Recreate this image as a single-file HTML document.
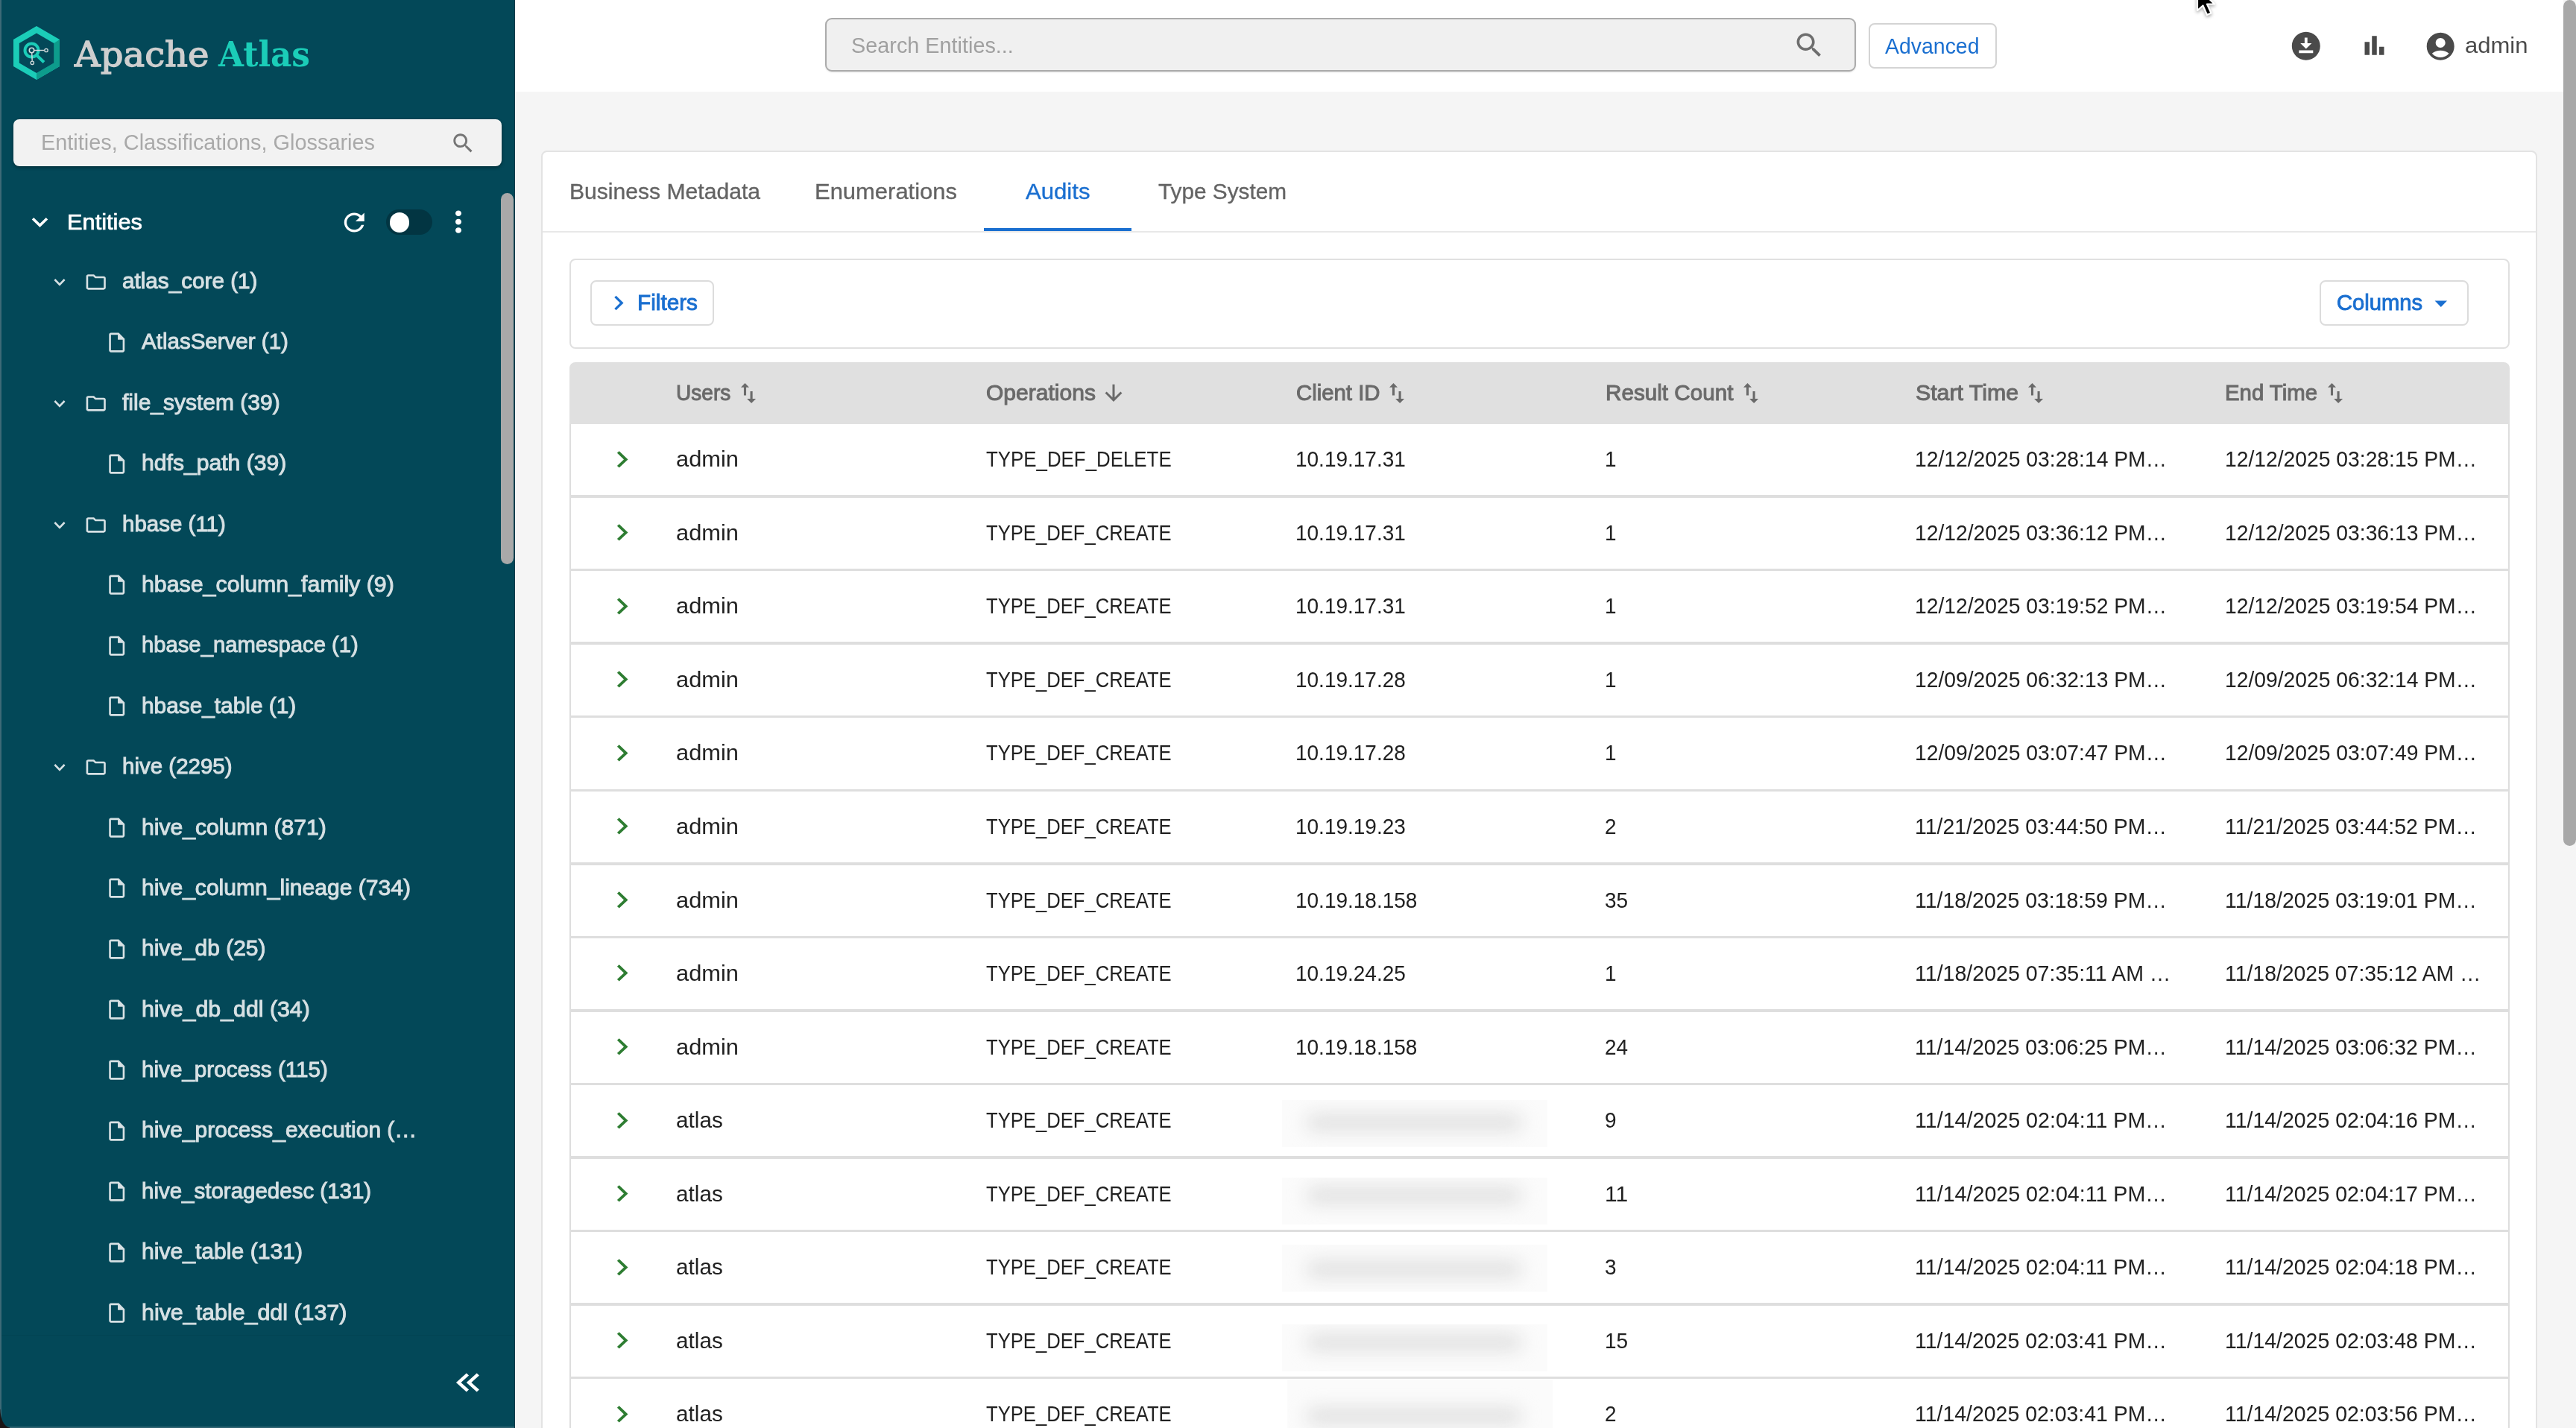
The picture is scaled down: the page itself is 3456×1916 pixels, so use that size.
<!DOCTYPE html>
<html lang="en"><head><meta charset="utf-8"><title>Apache Atlas - Audits</title>
<style>
html,body{margin:0;padding:0}
body{width:3456px;height:1916px;overflow:hidden;background:#f5f5f5;position:relative;font-family:"Liberation Sans",sans-serif}
.abs{position:absolute}
.ic{position:absolute;display:block;overflow:visible}
.t{position:absolute;white-space:pre;transform-origin:0 50%;line-height:1}
.sf{font-family:"DejaVu Serif","Liberation Serif",serif}
</style></head>
<body>
<aside aria-label="Sidebar">
<div class="abs" style="left:0;top:0;width:691px;height:1916px;background:#034858"></div>
<div class="abs" style="left:0;top:0;width:2px;height:1916px;background:#3d6a77"></div><div class="abs" style="left:0;top:1913.5px;width:691px;height:2.5px;background:#2f6472"></div><div class="abs" style="left:2px;top:1790.5px;width:689px;height:1.5px;background:rgba(0,0,0,.05)"></div>
<div class="abs" style="left:689.5px;top:0;width:1.5px;height:1916px;background:#023a49"></div>
<svg class="ic" style="left:18px;top:35px" width="62" height="72" viewBox="0 0 62 72">
<polygon points="31,0 62,18 62,54 31,72 0,54 0,18" fill="#1bcdb8"/>
<polygon points="62,18 62,54 31,72 31,63 54.3,49.6 54.3,22.9" fill="#0d9c8c"/>
<polygon points="31,9.5 54.3,22.9 54.3,49.6 31,63 7.8,49.6 7.8,22.9" fill="#034858"/>
<circle cx="24.5" cy="32.5" r="9" fill="none" stroke="#1bcdb8" stroke-width="4"/>
<line x1="31" y1="39" x2="41" y2="48.5" stroke="#1bcdb8" stroke-width="4"/>
<circle cx="24.5" cy="32.5" r="3.2" fill="none" stroke="#d5dcdd" stroke-width="1.6"/>
<line x1="27.7" y1="32.5" x2="41.5" y2="32.5" stroke="#d5dcdd" stroke-width="1.4"/>
<circle cx="44" cy="32.5" r="2.2" fill="none" stroke="#d5dcdd" stroke-width="1.3"/>
<line x1="24.7" y1="35.7" x2="25.2" y2="46.8" stroke="#d5dcdd" stroke-width="1.4"/>
<circle cx="25.3" cy="49.3" r="2.2" fill="none" stroke="#d5dcdd" stroke-width="1.3"/>
</svg>
<span class="t sf" style="left:100.0px;top:50.1px;font-size:46.0px;color:#cfcfcf;transform:scaleX(1.0451);-webkit-text-stroke:1.3px #cfcfcf">Apache</span>
<span class="t sf" style="left:293.0px;top:50.1px;font-size:46.0px;color:#1bcdb8;transform:scaleX(0.9512);font-weight:700">Atlas</span>
<div class="abs" style="left:18px;top:160px;width:655px;height:63px;background:#f2f2f2;border-radius:8px;box-shadow:0 2px 4px rgba(0,0,0,.35)"></div>
<span class="t" style="left:54.5px;top:175.9px;font-size:29.34px;color:#a9a9a9;transform:scaleX(0.9852)">Entities, Classifications, Glossaries</span>
<svg class="ic" style="left:603.88px;top:174.68px" width="34.58" height="34.58" viewBox="0 0 24 24" preserveAspectRatio="none" fill="#757575"><path d="M15.5 14h-.79l-.28-.27C15.41 12.59 16 11.11 16 9.5 16 5.91 13.09 3 9.5 3S3 5.91 3 9.5 5.91 16 9.5 16c1.61 0 3.09-.59 4.23-1.57l.27.28v.79l5 4.99L20.49 19l-4.99-5zm-6 0C7.01 14 5 11.99 5 9.5S7.01 5 9.5 5 14 7.01 14 9.5 11.99 14 9.5 14z"/></svg>
<svg class="ic" style="left:31.75px;top:277.43px" width="43.00" height="42.11" viewBox="0 0 24 24" preserveAspectRatio="none" fill="#fff"><path d="M16.59 8.59 12 13.17 7.41 8.59 6 10l6 6 6-6z"/></svg>
<span class="t" style="left:89.5px;top:283.2px;font-size:29.34px;color:#fff;transform:scaleX(1.0500);-webkit-text-stroke:0.7px #fff">Entities</span>
<svg class="ic" style="left:455.25px;top:278.50px" width="40.50" height="39.00" viewBox="0 0 24 24" preserveAspectRatio="none" fill="#fff"><path d="M17.65 6.35C16.2 4.9 14.21 4 12 4c-4.42 0-7.99 3.58-7.99 8s3.57 8 7.99 8c3.73 0 6.84-2.55 7.73-6h-2.08c-.82 2.33-3.04 4-5.65 4-3.31 0-6-2.69-6-6s2.69-6 6-6c1.66 0 3.14.69 4.22 1.78L13 11h7V4l-2.35 2.35z"/></svg>
<div class="abs" style="left:518px;top:281px;width:62px;height:34px;border-radius:17px;background:#023542"></div>
<div class="abs" style="left:522.5px;top:285px;width:26.5px;height:26.5px;border-radius:50%;background:#fff"></div>
<svg class="ic" style="left:591.00px;top:275.45px" width="48.00" height="45.30" viewBox="0 0 24 24" preserveAspectRatio="none" fill="#fff"><path d="M12 8c1.1 0 2-.9 2-2s-.9-2-2-2-2 .9-2 2 .9 2 2 2zm0 2c-1.1 0-2 .9-2 2s.9 2 2 2 2-.9 2-2-.9-2-2-2zm0 6c-1.1 0-2 .9-2 2s.9 2 2 2 2-.9 2-2-.9-2-2-2z"/></svg>
<div class="abs" style="left:672px;top:259px;width:17px;height:498px;border-radius:8.5px;background:#a9a9a9"></div>
<svg class="ic" style="left:64.50px;top:363.07px" width="30.00" height="31.09" viewBox="0 0 24 24" preserveAspectRatio="none" fill="#d7e1e4"><path d="M16.59 8.59 12 13.17 7.41 8.59 6 10l6 6 6-6z"/></svg>
<svg class="ic" style="left:113.38px;top:363.18px" width="31.44" height="30.75" viewBox="0 0 24 24" preserveAspectRatio="none" fill="#d7e1e4"><path d="M9.17 6l2 2H20v10H4V6h5.17M10 4H4c-1.1 0-1.99.9-1.99 2L2 18c0 1.1.9 2 2 2h16c1.1 0 2-.9 2-2V8c0-1.1-.9-2-2-2h-8l-2-2z"/></svg>
<span class="t" style="left:164.0px;top:362.0px;font-size:29.34px;color:#d7e1e4;transform:scaleX(1.0117);-webkit-text-stroke:0.95px #d7e1e4">atlas_core (1)</span>
<svg class="ic" style="left:140.75px;top:443.78px" width="31.50" height="31.32" viewBox="0 0 24 24" preserveAspectRatio="none" fill="#d7e1e4"><path d="M14 2H6c-1.1 0-1.99.9-1.99 2L4 20c0 1.1.89 2 1.99 2H18c1.1 0 2-.9 2-2V8l-6-6zM6 20V4h7v5h5v11H6z"/></svg>
<span class="t" style="left:189.5px;top:443.4px;font-size:29.34px;color:#d7e1e4;transform:scaleX(1.0069);-webkit-text-stroke:0.95px #d7e1e4">AtlasServer (1)</span>
<svg class="ic" style="left:64.50px;top:525.85px" width="30.00" height="31.09" viewBox="0 0 24 24" preserveAspectRatio="none" fill="#d7e1e4"><path d="M16.59 8.59 12 13.17 7.41 8.59 6 10l6 6 6-6z"/></svg>
<svg class="ic" style="left:113.38px;top:525.96px" width="31.44" height="30.75" viewBox="0 0 24 24" preserveAspectRatio="none" fill="#d7e1e4"><path d="M9.17 6l2 2H20v10H4V6h5.17M10 4H4c-1.1 0-1.99.9-1.99 2L2 18c0 1.1.9 2 2 2h16c1.1 0 2-.9 2-2V8c0-1.1-.9-2-2-2h-8l-2-2z"/></svg>
<span class="t" style="left:164.0px;top:524.7px;font-size:29.34px;color:#d7e1e4;transform:scaleX(1.0225);-webkit-text-stroke:0.95px #d7e1e4">file_system (39)</span>
<svg class="ic" style="left:140.75px;top:606.56px" width="31.50" height="31.32" viewBox="0 0 24 24" preserveAspectRatio="none" fill="#d7e1e4"><path d="M14 2H6c-1.1 0-1.99.9-1.99 2L4 20c0 1.1.89 2 1.99 2H18c1.1 0 2-.9 2-2V8l-6-6zM6 20V4h7v5h5v11H6z"/></svg>
<span class="t" style="left:189.5px;top:606.1px;font-size:29.34px;color:#d7e1e4;transform:scaleX(1.0274);-webkit-text-stroke:0.95px #d7e1e4">hdfs_path (39)</span>
<svg class="ic" style="left:64.50px;top:688.63px" width="30.00" height="31.09" viewBox="0 0 24 24" preserveAspectRatio="none" fill="#d7e1e4"><path d="M16.59 8.59 12 13.17 7.41 8.59 6 10l6 6 6-6z"/></svg>
<svg class="ic" style="left:113.38px;top:688.74px" width="31.44" height="30.75" viewBox="0 0 24 24" preserveAspectRatio="none" fill="#d7e1e4"><path d="M9.17 6l2 2H20v10H4V6h5.17M10 4H4c-1.1 0-1.99.9-1.99 2L2 18c0 1.1.9 2 2 2h16c1.1 0 2-.9 2-2V8c0-1.1-.9-2-2-2h-8l-2-2z"/></svg>
<span class="t" style="left:164.0px;top:687.5px;font-size:29.34px;color:#d7e1e4;transform:scaleX(1.0059);-webkit-text-stroke:0.95px #d7e1e4">hbase (11)</span>
<svg class="ic" style="left:140.75px;top:769.34px" width="31.50" height="31.32" viewBox="0 0 24 24" preserveAspectRatio="none" fill="#d7e1e4"><path d="M14 2H6c-1.1 0-1.99.9-1.99 2L4 20c0 1.1.89 2 1.99 2H18c1.1 0 2-.9 2-2V8l-6-6zM6 20V4h7v5h5v11H6z"/></svg>
<span class="t" style="left:189.5px;top:768.9px;font-size:29.34px;color:#d7e1e4;transform:scaleX(1.0339);-webkit-text-stroke:0.95px #d7e1e4">hbase_column_family (9)</span>
<svg class="ic" style="left:140.75px;top:850.73px" width="31.50" height="31.32" viewBox="0 0 24 24" preserveAspectRatio="none" fill="#d7e1e4"><path d="M14 2H6c-1.1 0-1.99.9-1.99 2L4 20c0 1.1.89 2 1.99 2H18c1.1 0 2-.9 2-2V8l-6-6zM6 20V4h7v5h5v11H6z"/></svg>
<span class="t" style="left:189.5px;top:850.3px;font-size:29.34px;color:#d7e1e4;transform:scaleX(0.9965);-webkit-text-stroke:0.95px #d7e1e4">hbase_namespace (1)</span>
<svg class="ic" style="left:140.75px;top:932.12px" width="31.50" height="31.32" viewBox="0 0 24 24" preserveAspectRatio="none" fill="#d7e1e4"><path d="M14 2H6c-1.1 0-1.99.9-1.99 2L4 20c0 1.1.89 2 1.99 2H18c1.1 0 2-.9 2-2V8l-6-6zM6 20V4h7v5h5v11H6z"/></svg>
<span class="t" style="left:189.5px;top:931.7px;font-size:29.34px;color:#d7e1e4;transform:scaleX(1.0167);-webkit-text-stroke:0.95px #d7e1e4">hbase_table (1)</span>
<svg class="ic" style="left:64.50px;top:1014.19px" width="30.00" height="31.09" viewBox="0 0 24 24" preserveAspectRatio="none" fill="#d7e1e4"><path d="M16.59 8.59 12 13.17 7.41 8.59 6 10l6 6 6-6z"/></svg>
<svg class="ic" style="left:113.38px;top:1014.30px" width="31.44" height="30.75" viewBox="0 0 24 24" preserveAspectRatio="none" fill="#d7e1e4"><path d="M9.17 6l2 2H20v10H4V6h5.17M10 4H4c-1.1 0-1.99.9-1.99 2L2 18c0 1.1.9 2 2 2h16c1.1 0 2-.9 2-2V8c0-1.1-.9-2-2-2h-8l-2-2z"/></svg>
<span class="t" style="left:164.0px;top:1013.1px;font-size:29.34px;color:#d7e1e4;transform:scaleX(1.0059);-webkit-text-stroke:0.95px #d7e1e4">hive (2295)</span>
<svg class="ic" style="left:140.75px;top:1094.90px" width="31.50" height="31.32" viewBox="0 0 24 24" preserveAspectRatio="none" fill="#d7e1e4"><path d="M14 2H6c-1.1 0-1.99.9-1.99 2L4 20c0 1.1.89 2 1.99 2H18c1.1 0 2-.9 2-2V8l-6-6zM6 20V4h7v5h5v11H6z"/></svg>
<span class="t" style="left:189.5px;top:1094.5px;font-size:29.34px;color:#d7e1e4;transform:scaleX(1.0273);-webkit-text-stroke:0.95px #d7e1e4">hive_column (871)</span>
<svg class="ic" style="left:140.75px;top:1176.29px" width="31.50" height="31.32" viewBox="0 0 24 24" preserveAspectRatio="none" fill="#d7e1e4"><path d="M14 2H6c-1.1 0-1.99.9-1.99 2L4 20c0 1.1.89 2 1.99 2H18c1.1 0 2-.9 2-2V8l-6-6zM6 20V4h7v5h5v11H6z"/></svg>
<span class="t" style="left:189.5px;top:1175.9px;font-size:29.34px;color:#d7e1e4;transform:scaleX(1.0250);-webkit-text-stroke:0.95px #d7e1e4">hive_column_lineage (734)</span>
<svg class="ic" style="left:140.75px;top:1257.68px" width="31.50" height="31.32" viewBox="0 0 24 24" preserveAspectRatio="none" fill="#d7e1e4"><path d="M14 2H6c-1.1 0-1.99.9-1.99 2L4 20c0 1.1.89 2 1.99 2H18c1.1 0 2-.9 2-2V8l-6-6zM6 20V4h7v5h5v11H6z"/></svg>
<span class="t" style="left:189.5px;top:1257.3px;font-size:29.34px;color:#d7e1e4;transform:scaleX(1.0206);-webkit-text-stroke:0.95px #d7e1e4">hive_db (25)</span>
<svg class="ic" style="left:140.75px;top:1339.07px" width="31.50" height="31.32" viewBox="0 0 24 24" preserveAspectRatio="none" fill="#d7e1e4"><path d="M14 2H6c-1.1 0-1.99.9-1.99 2L4 20c0 1.1.89 2 1.99 2H18c1.1 0 2-.9 2-2V8l-6-6zM6 20V4h7v5h5v11H6z"/></svg>
<span class="t" style="left:189.5px;top:1338.6px;font-size:29.34px;color:#d7e1e4;transform:scaleX(1.0336);-webkit-text-stroke:0.95px #d7e1e4">hive_db_ddl (34)</span>
<svg class="ic" style="left:140.75px;top:1420.46px" width="31.50" height="31.32" viewBox="0 0 24 24" preserveAspectRatio="none" fill="#d7e1e4"><path d="M14 2H6c-1.1 0-1.99.9-1.99 2L4 20c0 1.1.89 2 1.99 2H18c1.1 0 2-.9 2-2V8l-6-6zM6 20V4h7v5h5v11H6z"/></svg>
<span class="t" style="left:189.5px;top:1420.0px;font-size:29.34px;color:#d7e1e4;transform:scaleX(1.0108);-webkit-text-stroke:0.95px #d7e1e4">hive_process (115)</span>
<svg class="ic" style="left:140.75px;top:1501.85px" width="31.50" height="31.32" viewBox="0 0 24 24" preserveAspectRatio="none" fill="#d7e1e4"><path d="M14 2H6c-1.1 0-1.99.9-1.99 2L4 20c0 1.1.89 2 1.99 2H18c1.1 0 2-.9 2-2V8l-6-6zM6 20V4h7v5h5v11H6z"/></svg>
<span class="t" style="left:189.5px;top:1501.4px;font-size:29.34px;color:#d7e1e4;transform:scaleX(1.0202);-webkit-text-stroke:0.95px #d7e1e4">hive_process_execution (…</span>
<svg class="ic" style="left:140.75px;top:1583.24px" width="31.50" height="31.32" viewBox="0 0 24 24" preserveAspectRatio="none" fill="#d7e1e4"><path d="M14 2H6c-1.1 0-1.99.9-1.99 2L4 20c0 1.1.89 2 1.99 2H18c1.1 0 2-.9 2-2V8l-6-6zM6 20V4h7v5h5v11H6z"/></svg>
<span class="t" style="left:189.5px;top:1582.8px;font-size:29.34px;color:#d7e1e4;transform:scaleX(1.0054);-webkit-text-stroke:0.95px #d7e1e4">hive_storagedesc (131)</span>
<svg class="ic" style="left:140.75px;top:1664.63px" width="31.50" height="31.32" viewBox="0 0 24 24" preserveAspectRatio="none" fill="#d7e1e4"><path d="M14 2H6c-1.1 0-1.99.9-1.99 2L4 20c0 1.1.89 2 1.99 2H18c1.1 0 2-.9 2-2V8l-6-6zM6 20V4h7v5h5v11H6z"/></svg>
<span class="t" style="left:189.5px;top:1664.2px;font-size:29.34px;color:#d7e1e4;transform:scaleX(1.0268);-webkit-text-stroke:0.95px #d7e1e4">hive_table (131)</span>
<svg class="ic" style="left:140.75px;top:1746.02px" width="31.50" height="31.32" viewBox="0 0 24 24" preserveAspectRatio="none" fill="#d7e1e4"><path d="M14 2H6c-1.1 0-1.99.9-1.99 2L4 20c0 1.1.89 2 1.99 2H18c1.1 0 2-.9 2-2V8l-6-6zM6 20V4h7v5h5v11H6z"/></svg>
<span class="t" style="left:189.5px;top:1745.6px;font-size:29.34px;color:#d7e1e4;transform:scaleX(1.0361);-webkit-text-stroke:0.95px #d7e1e4">hive_table_ddl (137)</span>
<svg class="ic" style="left:599.08px;top:1829.50px" width="55.48" height="50.00" viewBox="0 0 24 24" preserveAspectRatio="none" fill="#fff"><path d="M17.59 18 19 16.59 14.42 12 19 7.41 17.59 6l-6 6zM11.59 18 13 16.59 8.42 12 13 7.41 11.59 6l-6 6z"/></svg>
<div class="abs" style="left:0;top:1891px;width:13px;height:25px;background:radial-gradient(13px 25px at 100% 0%, rgba(0,0,0,0) 0, rgba(0,0,0,0) 93%, #1b1515 100%)"></div>
</aside>
<header>
<div class="abs" style="left:691px;top:0;width:2765px;height:123px;background:#fff"></div>
<div class="abs" style="left:1107px;top:24px;width:1382.6px;height:72.4px;box-sizing:border-box;background:#f0f0f0;border:2.5px solid #ababab;border-radius:9px;box-shadow:0 1px 2px rgba(0,0,0,.12)"></div>
<span class="t" style="left:1142.0px;top:45.7px;font-size:29.34px;color:#a0a0a0;transform:scaleX(0.9827)">Search Entities...</span>
<svg class="ic" style="left:2405.44px;top:39.08px" width="44.46" height="43.36" viewBox="0 0 24 24" preserveAspectRatio="none" fill="#6e6e6e"><path d="M15.5 14h-.79l-.28-.27C15.41 12.59 16 11.11 16 9.5 16 5.91 13.09 3 9.5 3S3 5.91 3 9.5 5.91 16 9.5 16c1.61 0 3.09-.59 4.23-1.57l.27.28v.79l5 4.99L20.49 19l-4.99-5zm-6 0C7.01 14 5 11.99 5 9.5S7.01 5 9.5 5 14 7.01 14 9.5 11.99 14 9.5 14z"/></svg>
<div class="abs" style="left:2507px;top:31.4px;width:172px;height:60.4px;box-sizing:border-box;background:#fff;border:2px solid #d4d4d4;border-radius:8px"></div>
<span class="t" style="left:2529.0px;top:46.7px;font-size:29.34px;color:#1a6fd0;transform:scaleX(0.9697)">Advanced</span>
<svg class="ic" style="left:3071.20px;top:39.20px" width="45.60" height="45.60" viewBox="0 0 24 24" preserveAspectRatio="none" fill="#4a4a4a"><path d="M12 2C6.49 2 2 6.49 2 12s4.49 10 10 10 10-4.49 10-10S17.51 2 12 2zm-1 8V6h2v4h3l-4 4-4-4h3zm6 7H7v-2h10v2z"/></svg>
<svg class="ic" style="left:3165.50px;top:42.05px" width="39.00" height="38.10" viewBox="0 0 24 24" preserveAspectRatio="none" fill="#4a4a4a"><path d="M4 9h4v11H4zM10 4h4v16h-4zM16 13h4v7h-4z"/></svg>
<svg class="ic" style="left:3251.80px;top:39.80px" width="44.40" height="44.40" viewBox="0 0 24 24" preserveAspectRatio="none" fill="#4a4a4a"><path d="M12 2C6.48 2 2 6.48 2 12s4.48 10 10 10 10-4.48 10-10S17.52 2 12 2zm0 4c1.93 0 3.5 1.57 3.5 3.5S13.93 13 12 13s-3.5-1.57-3.5-3.5S10.07 6 12 6zm0 14c-2.03 0-4.43-.82-6.14-2.88C7.55 15.8 9.68 15 12 15s4.45.8 6.14 2.12C16.43 19.18 14.03 20 12 20z"/></svg>
<span class="t" style="left:3306.5px;top:46.0px;font-size:29.34px;color:#4a4a4a;transform:scaleX(1.0577)">admin</span>
<div class="abs" style="left:3439px;top:0;width:17px;height:1916px;background:#f5f5f5"></div>
<div class="abs" style="left:3439px;top:0px;width:17px;height:1135px;border-radius:8.5px;background:#a8a8a8"></div>
</header>
<main>
<div class="abs" style="left:726px;top:202px;width:2678px;height:1760px;box-sizing:border-box;background:#fff;border:2px solid #e3e3e3;border-radius:8px"></div>
<span class="t" style="left:764.3px;top:242.2px;font-size:29.34px;color:#646464;transform:scaleX(1.0263);-webkit-text-stroke:0.35px #646464">Business Metadata</span>
<span class="t" style="left:1092.7px;top:242.2px;font-size:29.34px;color:#646464;transform:scaleX(1.0555);-webkit-text-stroke:0.35px #646464">Enumerations</span>
<span class="t" style="left:1375.5px;top:242.2px;font-size:29.34px;color:#1a6fd0;transform:scaleX(1.0611);-webkit-text-stroke:0.35px #1a6fd0">Audits</span>
<span class="t" style="left:1554.0px;top:242.2px;font-size:29.34px;color:#646464;transform:scaleX(1.0147);-webkit-text-stroke:0.35px #646464">Type System</span>
<div class="abs" style="left:728px;top:310px;width:2674px;height:2px;background:#e8e8e8"></div>
<div class="abs" style="left:1320px;top:306px;width:198px;height:4px;background:#1a6fd0"></div>
<div class="abs" style="left:764px;top:347px;width:2603px;height:121px;box-sizing:border-box;background:#fff;border:2px solid #e0e0e0;border-radius:8px"></div>
<div class="abs" style="left:792px;top:376px;width:166px;height:60.7px;box-sizing:border-box;background:#fff;border:2px solid #dcdcdc;border-radius:8px"></div>
<svg class="ic" style="left:809.74px;top:387.05px" width="39.84" height="39.00" viewBox="0 0 24 24" preserveAspectRatio="none" fill="#1a6fd0"><path d="M10 6 8.59 7.41 13.17 12l-4.58 4.59L10 18l6-6z"/></svg>
<span class="t" style="left:855.2px;top:391.2px;font-size:29.34px;color:#1a6fd0;transform:scaleX(1.0145);-webkit-text-stroke:0.9px #1a6fd0">Filters</span>
<div class="abs" style="left:3112px;top:376px;width:200px;height:60.7px;box-sizing:border-box;background:#fff;border:2px solid #dcdcdc;border-radius:8px"></div>
<span class="t" style="left:3134.6px;top:391.1px;font-size:29.34px;color:#1a6fd0;transform:scaleX(0.9937);-webkit-text-stroke:0.9px #1a6fd0">Columns</span>
<svg class="ic" style="left:3254.95px;top:385.90px" width="39.60" height="41.76" viewBox="0 0 24 24" preserveAspectRatio="none" fill="#1a6fd0"><path d="M7 10l5 5 5-5z"/></svg>
<div class="abs" style="left:764px;top:569px;width:2603px;height:1400px;box-sizing:border-box;border-left:2px solid #dedede;border-right:2px solid #dedede;background:#fff"></div>
<div class="abs" style="left:764px;top:486px;width:2603px;height:83px;background:#e0e0e0;border-radius:8px 8px 0 0"></div>
<span class="t" style="left:907.3px;top:512.0px;font-size:29.34px;color:#6a6a6a;transform:scaleX(0.9570);-webkit-text-stroke:1.0px #6a6a6a">Users</span>
<svg class="ic" style="left:993.9px;top:512px" width="22" height="32" viewBox="0 0 22 32" fill="#6a6a6a"><path d="M5.5 1.9 L11 7.8 H7.05 V18.6 H3.95 V7.8 H0 Z"/><path d="M14.1 29 L8.1 23.1 H12.55 V12.9 H15.65 V23.1 H20.1 Z"/></svg>
<span class="t" style="left:1323.0px;top:512.0px;font-size:29.34px;color:#6a6a6a;transform:scaleX(1.0246);-webkit-text-stroke:1.0px #6a6a6a">Operations</span>
<svg class="ic" style="left:1481.5px;top:515px" width="25" height="25" viewBox="0 0 25 25" fill="none" stroke="#6a6a6a" stroke-width="3" stroke-linecap="butt" stroke-linejoin="miter"><path d="M12 0.7 V21 M1.6 11.5 L12 21.9 L22.4 11.5"/></svg>
<span class="t" style="left:1738.5px;top:512.0px;font-size:29.34px;color:#6a6a6a;transform:scaleX(1.0003);-webkit-text-stroke:1.0px #6a6a6a">Client ID</span>
<svg class="ic" style="left:1864.3px;top:512px" width="22" height="32" viewBox="0 0 22 32" fill="#6a6a6a"><path d="M5.5 1.9 L11 7.8 H7.05 V18.6 H3.95 V7.8 H0 Z"/><path d="M14.1 29 L8.1 23.1 H12.55 V12.9 H15.65 V23.1 H20.1 Z"/></svg>
<span class="t" style="left:2154.2px;top:512.0px;font-size:29.34px;color:#6a6a6a;transform:scaleX(1.0109);-webkit-text-stroke:1.0px #6a6a6a">Result Count</span>
<svg class="ic" style="left:2338.9px;top:512px" width="22" height="32" viewBox="0 0 22 32" fill="#6a6a6a"><path d="M5.5 1.9 L11 7.8 H7.05 V18.6 H3.95 V7.8 H0 Z"/><path d="M14.1 29 L8.1 23.1 H12.55 V12.9 H15.65 V23.1 H20.1 Z"/></svg>
<span class="t" style="left:2569.8px;top:512.0px;font-size:29.34px;color:#6a6a6a;transform:scaleX(1.0326);-webkit-text-stroke:1.0px #6a6a6a">Start Time</span>
<svg class="ic" style="left:2721.1px;top:512px" width="22" height="32" viewBox="0 0 22 32" fill="#6a6a6a"><path d="M5.5 1.9 L11 7.8 H7.05 V18.6 H3.95 V7.8 H0 Z"/><path d="M14.1 29 L8.1 23.1 H12.55 V12.9 H15.65 V23.1 H20.1 Z"/></svg>
<span class="t" style="left:2985.4px;top:512.0px;font-size:29.34px;color:#6a6a6a;transform:scaleX(1.0009);-webkit-text-stroke:1.0px #6a6a6a">End Time</span>
<svg class="ic" style="left:3122.7px;top:512px" width="22" height="32" viewBox="0 0 22 32" fill="#6a6a6a"><path d="M5.5 1.9 L11 7.8 H7.05 V18.6 H3.95 V7.8 H0 Z"/><path d="M14.1 29 L8.1 23.1 H12.55 V12.9 H15.65 V23.1 H20.1 Z"/></svg>
<div role="row">
<div class="abs" style="left:766px;top:664.3px;width:2599px;height:3.6px;background:#dedede"></div>
<svg class="ic" style="left:811.28px;top:593.70px" width="47.29" height="44.80" viewBox="0 0 24 24" preserveAspectRatio="none" fill="#2e7d32"><path d="M10 6 8.59 7.41 13.17 12l-4.58 4.59L10 18l6-6z"/></svg>
<span class="t" style="left:907.3px;top:601.3px;font-size:29.34px;color:#212121;transform:scaleX(1.0503)">admin</span>
<span class="t" style="left:1323.2px;top:601.3px;font-size:29.34px;color:#212121;transform:scaleX(0.8819)">TYPE_DEF_DELETE</span>
<span class="t" style="left:1737.6px;top:601.3px;font-size:29.34px;color:#212121;transform:scaleX(0.9540)">10.19.17.31</span>
<span class="t" style="left:2153.0px;top:601.3px;font-size:29.34px;color:#212121;transform:scaleX(0.9536)">1</span>
<span class="t" style="left:2569.3px;top:601.3px;font-size:29.34px;color:#212121;transform:scaleX(0.9639)">12/12/2025 03:28:14 PM…</span>
<span class="t" style="left:2985.0px;top:601.3px;font-size:29.34px;color:#212121;transform:scaleX(0.9639)">12/12/2025 03:28:15 PM…</span>
</div>
<div role="row">
<div class="abs" style="left:766px;top:762.8px;width:2599px;height:3.6px;background:#dedede"></div>
<svg class="ic" style="left:811.28px;top:692.24px" width="47.29" height="44.80" viewBox="0 0 24 24" preserveAspectRatio="none" fill="#2e7d32"><path d="M10 6 8.59 7.41 13.17 12l-4.58 4.59L10 18l6-6z"/></svg>
<span class="t" style="left:907.3px;top:699.8px;font-size:29.34px;color:#212121;transform:scaleX(1.0503)">admin</span>
<span class="t" style="left:1323.2px;top:699.8px;font-size:29.34px;color:#212121;transform:scaleX(0.8735)">TYPE_DEF_CREATE</span>
<span class="t" style="left:1737.6px;top:699.8px;font-size:29.34px;color:#212121;transform:scaleX(0.9540)">10.19.17.31</span>
<span class="t" style="left:2153.0px;top:699.8px;font-size:29.34px;color:#212121;transform:scaleX(0.9536)">1</span>
<span class="t" style="left:2569.3px;top:699.8px;font-size:29.34px;color:#212121;transform:scaleX(0.9639)">12/12/2025 03:36:12 PM…</span>
<span class="t" style="left:2985.0px;top:699.8px;font-size:29.34px;color:#212121;transform:scaleX(0.9639)">12/12/2025 03:36:13 PM…</span>
</div>
<div role="row">
<div class="abs" style="left:766px;top:861.4px;width:2599px;height:3.6px;background:#dedede"></div>
<svg class="ic" style="left:811.28px;top:790.78px" width="47.29" height="44.80" viewBox="0 0 24 24" preserveAspectRatio="none" fill="#2e7d32"><path d="M10 6 8.59 7.41 13.17 12l-4.58 4.59L10 18l6-6z"/></svg>
<span class="t" style="left:907.3px;top:798.3px;font-size:29.34px;color:#212121;transform:scaleX(1.0503)">admin</span>
<span class="t" style="left:1323.2px;top:798.3px;font-size:29.34px;color:#212121;transform:scaleX(0.8735)">TYPE_DEF_CREATE</span>
<span class="t" style="left:1737.6px;top:798.3px;font-size:29.34px;color:#212121;transform:scaleX(0.9540)">10.19.17.31</span>
<span class="t" style="left:2153.0px;top:798.3px;font-size:29.34px;color:#212121;transform:scaleX(0.9536)">1</span>
<span class="t" style="left:2569.3px;top:798.3px;font-size:29.34px;color:#212121;transform:scaleX(0.9639)">12/12/2025 03:19:52 PM…</span>
<span class="t" style="left:2985.0px;top:798.3px;font-size:29.34px;color:#212121;transform:scaleX(0.9639)">12/12/2025 03:19:54 PM…</span>
</div>
<div role="row">
<div class="abs" style="left:766px;top:959.9px;width:2599px;height:3.6px;background:#dedede"></div>
<svg class="ic" style="left:811.28px;top:889.32px" width="47.29" height="44.80" viewBox="0 0 24 24" preserveAspectRatio="none" fill="#2e7d32"><path d="M10 6 8.59 7.41 13.17 12l-4.58 4.59L10 18l6-6z"/></svg>
<span class="t" style="left:907.3px;top:896.9px;font-size:29.34px;color:#212121;transform:scaleX(1.0503)">admin</span>
<span class="t" style="left:1323.2px;top:896.9px;font-size:29.34px;color:#212121;transform:scaleX(0.8735)">TYPE_DEF_CREATE</span>
<span class="t" style="left:1737.6px;top:896.9px;font-size:29.34px;color:#212121;transform:scaleX(0.9540)">10.19.17.28</span>
<span class="t" style="left:2153.0px;top:896.9px;font-size:29.34px;color:#212121;transform:scaleX(0.9536)">1</span>
<span class="t" style="left:2569.3px;top:896.9px;font-size:29.34px;color:#212121;transform:scaleX(0.9639)">12/09/2025 06:32:13 PM…</span>
<span class="t" style="left:2985.0px;top:896.9px;font-size:29.34px;color:#212121;transform:scaleX(0.9639)">12/09/2025 06:32:14 PM…</span>
</div>
<div role="row">
<div class="abs" style="left:766px;top:1058.5px;width:2599px;height:3.6px;background:#dedede"></div>
<svg class="ic" style="left:811.28px;top:987.86px" width="47.29" height="44.80" viewBox="0 0 24 24" preserveAspectRatio="none" fill="#2e7d32"><path d="M10 6 8.59 7.41 13.17 12l-4.58 4.59L10 18l6-6z"/></svg>
<span class="t" style="left:907.3px;top:995.4px;font-size:29.34px;color:#212121;transform:scaleX(1.0503)">admin</span>
<span class="t" style="left:1323.2px;top:995.4px;font-size:29.34px;color:#212121;transform:scaleX(0.8735)">TYPE_DEF_CREATE</span>
<span class="t" style="left:1737.6px;top:995.4px;font-size:29.34px;color:#212121;transform:scaleX(0.9540)">10.19.17.28</span>
<span class="t" style="left:2153.0px;top:995.4px;font-size:29.34px;color:#212121;transform:scaleX(0.9536)">1</span>
<span class="t" style="left:2569.3px;top:995.4px;font-size:29.34px;color:#212121;transform:scaleX(0.9639)">12/09/2025 03:07:47 PM…</span>
<span class="t" style="left:2985.0px;top:995.4px;font-size:29.34px;color:#212121;transform:scaleX(0.9639)">12/09/2025 03:07:49 PM…</span>
</div>
<div role="row">
<div class="abs" style="left:766px;top:1157.0px;width:2599px;height:3.6px;background:#dedede"></div>
<svg class="ic" style="left:811.28px;top:1086.40px" width="47.29" height="44.80" viewBox="0 0 24 24" preserveAspectRatio="none" fill="#2e7d32"><path d="M10 6 8.59 7.41 13.17 12l-4.58 4.59L10 18l6-6z"/></svg>
<span class="t" style="left:907.3px;top:1094.0px;font-size:29.34px;color:#212121;transform:scaleX(1.0503)">admin</span>
<span class="t" style="left:1323.2px;top:1094.0px;font-size:29.34px;color:#212121;transform:scaleX(0.8735)">TYPE_DEF_CREATE</span>
<span class="t" style="left:1737.6px;top:1094.0px;font-size:29.34px;color:#212121;transform:scaleX(0.9540)">10.19.19.23</span>
<span class="t" style="left:2153.0px;top:1094.0px;font-size:29.34px;color:#212121;transform:scaleX(0.9536)">2</span>
<span class="t" style="left:2569.3px;top:1094.0px;font-size:29.34px;color:#212121;transform:scaleX(0.9699)">11/21/2025 03:44:50 PM…</span>
<span class="t" style="left:2985.0px;top:1094.0px;font-size:29.34px;color:#212121;transform:scaleX(0.9699)">11/21/2025 03:44:52 PM…</span>
</div>
<div role="row">
<div class="abs" style="left:766px;top:1255.5px;width:2599px;height:3.6px;background:#dedede"></div>
<svg class="ic" style="left:811.28px;top:1184.94px" width="47.29" height="44.80" viewBox="0 0 24 24" preserveAspectRatio="none" fill="#2e7d32"><path d="M10 6 8.59 7.41 13.17 12l-4.58 4.59L10 18l6-6z"/></svg>
<span class="t" style="left:907.3px;top:1192.5px;font-size:29.34px;color:#212121;transform:scaleX(1.0503)">admin</span>
<span class="t" style="left:1323.2px;top:1192.5px;font-size:29.34px;color:#212121;transform:scaleX(0.8735)">TYPE_DEF_CREATE</span>
<span class="t" style="left:1737.6px;top:1192.5px;font-size:29.34px;color:#212121;transform:scaleX(0.9540)">10.19.18.158</span>
<span class="t" style="left:2153.0px;top:1192.5px;font-size:29.34px;color:#212121;transform:scaleX(0.9536)">35</span>
<span class="t" style="left:2569.3px;top:1192.5px;font-size:29.34px;color:#212121;transform:scaleX(0.9699)">11/18/2025 03:18:59 PM…</span>
<span class="t" style="left:2985.0px;top:1192.5px;font-size:29.34px;color:#212121;transform:scaleX(0.9699)">11/18/2025 03:19:01 PM…</span>
</div>
<div role="row">
<div class="abs" style="left:766px;top:1354.1px;width:2599px;height:3.6px;background:#dedede"></div>
<svg class="ic" style="left:811.28px;top:1283.48px" width="47.29" height="44.80" viewBox="0 0 24 24" preserveAspectRatio="none" fill="#2e7d32"><path d="M10 6 8.59 7.41 13.17 12l-4.58 4.59L10 18l6-6z"/></svg>
<span class="t" style="left:907.3px;top:1291.0px;font-size:29.34px;color:#212121;transform:scaleX(1.0503)">admin</span>
<span class="t" style="left:1323.2px;top:1291.0px;font-size:29.34px;color:#212121;transform:scaleX(0.8735)">TYPE_DEF_CREATE</span>
<span class="t" style="left:1737.6px;top:1291.0px;font-size:29.34px;color:#212121;transform:scaleX(0.9540)">10.19.24.25</span>
<span class="t" style="left:2153.0px;top:1291.0px;font-size:29.34px;color:#212121;transform:scaleX(0.9536)">1</span>
<span class="t" style="left:2569.3px;top:1291.0px;font-size:29.34px;color:#212121;transform:scaleX(0.9736)">11/18/2025 07:35:11 AM …</span>
<span class="t" style="left:2985.0px;top:1291.0px;font-size:29.34px;color:#212121;transform:scaleX(0.9677)">11/18/2025 07:35:12 AM …</span>
</div>
<div role="row">
<div class="abs" style="left:766px;top:1452.6px;width:2599px;height:3.6px;background:#dedede"></div>
<svg class="ic" style="left:811.28px;top:1382.02px" width="47.29" height="44.80" viewBox="0 0 24 24" preserveAspectRatio="none" fill="#2e7d32"><path d="M10 6 8.59 7.41 13.17 12l-4.58 4.59L10 18l6-6z"/></svg>
<span class="t" style="left:907.3px;top:1389.6px;font-size:29.34px;color:#212121;transform:scaleX(1.0503)">admin</span>
<span class="t" style="left:1323.2px;top:1389.6px;font-size:29.34px;color:#212121;transform:scaleX(0.8735)">TYPE_DEF_CREATE</span>
<span class="t" style="left:1737.6px;top:1389.6px;font-size:29.34px;color:#212121;transform:scaleX(0.9540)">10.19.18.158</span>
<span class="t" style="left:2153.0px;top:1389.6px;font-size:29.34px;color:#212121;transform:scaleX(0.9536)">24</span>
<span class="t" style="left:2569.3px;top:1389.6px;font-size:29.34px;color:#212121;transform:scaleX(0.9699)">11/14/2025 03:06:25 PM…</span>
<span class="t" style="left:2985.0px;top:1389.6px;font-size:29.34px;color:#212121;transform:scaleX(0.9699)">11/14/2025 03:06:32 PM…</span>
</div>
<div role="row">
<div class="abs" style="left:766px;top:1551.2px;width:2599px;height:3.6px;background:#dedede"></div>
<svg class="ic" style="left:811.28px;top:1480.56px" width="47.29" height="44.80" viewBox="0 0 24 24" preserveAspectRatio="none" fill="#2e7d32"><path d="M10 6 8.59 7.41 13.17 12l-4.58 4.59L10 18l6-6z"/></svg>
<span class="t" style="left:907.3px;top:1488.1px;font-size:29.34px;color:#212121;transform:scaleX(1.0135)">atlas</span>
<span class="t" style="left:1323.2px;top:1488.1px;font-size:29.34px;color:#212121;transform:scaleX(0.8735)">TYPE_DEF_CREATE</span>
<div class="abs" style="left:1720px;top:1476px;width:356px;height:63.3px;background:#fbfbfb;overflow:hidden"><div class="abs" style="left:32.0px;top:18.5px;width:290px;height:22px;background:#dfdfdf;border-radius:11px;filter:blur(12px)"></div></div>
<span class="t" style="left:2153.0px;top:1488.1px;font-size:29.34px;color:#212121;transform:scaleX(0.9536)">9</span>
<span class="t" style="left:2569.3px;top:1488.1px;font-size:29.34px;color:#212121;transform:scaleX(0.9760)">11/14/2025 02:04:11 PM…</span>
<span class="t" style="left:2985.0px;top:1488.1px;font-size:29.34px;color:#212121;transform:scaleX(0.9699)">11/14/2025 02:04:16 PM…</span>
</div>
<div role="row">
<div class="abs" style="left:766px;top:1649.7px;width:2599px;height:3.6px;background:#dedede"></div>
<svg class="ic" style="left:811.28px;top:1579.10px" width="47.29" height="44.80" viewBox="0 0 24 24" preserveAspectRatio="none" fill="#2e7d32"><path d="M10 6 8.59 7.41 13.17 12l-4.58 4.59L10 18l6-6z"/></svg>
<span class="t" style="left:907.3px;top:1586.7px;font-size:29.34px;color:#212121;transform:scaleX(1.0135)">atlas</span>
<span class="t" style="left:1323.2px;top:1586.7px;font-size:29.34px;color:#212121;transform:scaleX(0.8735)">TYPE_DEF_CREATE</span>
<div class="abs" style="left:1720px;top:1580px;width:356px;height:63.3px;background:#fbfbfb;overflow:hidden"><div class="abs" style="left:32.0px;top:13.0px;width:290px;height:22px;background:#dfdfdf;border-radius:11px;filter:blur(12px)"></div></div>
<span class="t" style="left:2153.0px;top:1586.7px;font-size:29.34px;color:#212121;transform:scaleX(1.0217)">11</span>
<span class="t" style="left:2569.3px;top:1586.7px;font-size:29.34px;color:#212121;transform:scaleX(0.9760)">11/14/2025 02:04:11 PM…</span>
<span class="t" style="left:2985.0px;top:1586.7px;font-size:29.34px;color:#212121;transform:scaleX(0.9699)">11/14/2025 02:04:17 PM…</span>
</div>
<div role="row">
<div class="abs" style="left:766px;top:1748.2px;width:2599px;height:3.6px;background:#dedede"></div>
<svg class="ic" style="left:811.28px;top:1677.64px" width="47.29" height="44.80" viewBox="0 0 24 24" preserveAspectRatio="none" fill="#2e7d32"><path d="M10 6 8.59 7.41 13.17 12l-4.58 4.59L10 18l6-6z"/></svg>
<span class="t" style="left:907.3px;top:1685.2px;font-size:29.34px;color:#212121;transform:scaleX(1.0135)">atlas</span>
<span class="t" style="left:1323.2px;top:1685.2px;font-size:29.34px;color:#212121;transform:scaleX(0.8735)">TYPE_DEF_CREATE</span>
<div class="abs" style="left:1720px;top:1670px;width:356px;height:63.3px;background:#fbfbfb;overflow:hidden"><div class="abs" style="left:32.0px;top:21.5px;width:290px;height:22px;background:#dfdfdf;border-radius:11px;filter:blur(12px)"></div></div>
<span class="t" style="left:2153.0px;top:1685.2px;font-size:29.34px;color:#212121;transform:scaleX(0.9536)">3</span>
<span class="t" style="left:2569.3px;top:1685.2px;font-size:29.34px;color:#212121;transform:scaleX(0.9760)">11/14/2025 02:04:11 PM…</span>
<span class="t" style="left:2985.0px;top:1685.2px;font-size:29.34px;color:#212121;transform:scaleX(0.9699)">11/14/2025 02:04:18 PM…</span>
</div>
<div role="row">
<div class="abs" style="left:766px;top:1846.8px;width:2599px;height:3.6px;background:#dedede"></div>
<svg class="ic" style="left:811.28px;top:1776.18px" width="47.29" height="44.80" viewBox="0 0 24 24" preserveAspectRatio="none" fill="#2e7d32"><path d="M10 6 8.59 7.41 13.17 12l-4.58 4.59L10 18l6-6z"/></svg>
<span class="t" style="left:907.3px;top:1783.7px;font-size:29.34px;color:#212121;transform:scaleX(1.0135)">atlas</span>
<span class="t" style="left:1323.2px;top:1783.7px;font-size:29.34px;color:#212121;transform:scaleX(0.8735)">TYPE_DEF_CREATE</span>
<div class="abs" style="left:1720px;top:1776.7px;width:356px;height:63.3px;background:#fbfbfb;overflow:hidden"><div class="abs" style="left:32.0px;top:13.4px;width:290px;height:22px;background:#dfdfdf;border-radius:11px;filter:blur(12px)"></div></div>
<span class="t" style="left:2153.0px;top:1783.7px;font-size:29.34px;color:#212121;transform:scaleX(0.9536)">15</span>
<span class="t" style="left:2569.3px;top:1783.7px;font-size:29.34px;color:#212121;transform:scaleX(0.9699)">11/14/2025 02:03:41 PM…</span>
<span class="t" style="left:2985.0px;top:1783.7px;font-size:29.34px;color:#212121;transform:scaleX(0.9699)">11/14/2025 02:03:48 PM…</span>
</div>
<div role="row">
<div class="abs" style="left:766px;top:1945.3px;width:2599px;height:3.6px;background:#dedede"></div>
<svg class="ic" style="left:811.28px;top:1874.72px" width="47.29" height="44.80" viewBox="0 0 24 24" preserveAspectRatio="none" fill="#2e7d32"><path d="M10 6 8.59 7.41 13.17 12l-4.58 4.59L10 18l6-6z"/></svg>
<span class="t" style="left:907.3px;top:1882.3px;font-size:29.34px;color:#212121;transform:scaleX(1.0135)">atlas</span>
<span class="t" style="left:1323.2px;top:1882.3px;font-size:29.34px;color:#212121;transform:scaleX(0.8735)">TYPE_DEF_CREATE</span>
<div class="abs" style="left:1726.7px;top:1850.7px;width:356px;height:70px;background:#fbfbfb;overflow:hidden"><div class="abs" style="left:25.3px;top:37.9px;width:290px;height:22px;background:#dfdfdf;border-radius:11px;filter:blur(12px)"></div></div>
<span class="t" style="left:2153.0px;top:1882.3px;font-size:29.34px;color:#212121;transform:scaleX(0.9536)">2</span>
<span class="t" style="left:2569.3px;top:1882.3px;font-size:29.34px;color:#212121;transform:scaleX(0.9699)">11/14/2025 02:03:41 PM…</span>
<span class="t" style="left:2985.0px;top:1882.3px;font-size:29.34px;color:#212121;transform:scaleX(0.9699)">11/14/2025 02:03:56 PM…</span>
</div>
</main>
<svg class="ic" style="left:2944px;top:-19px;filter:drop-shadow(0 2px 2px rgba(0,0,0,.35))" width="34" height="46" viewBox="0 0 34 46"><path d="M4 2 L4 33 L11.5 26.5 L17 39 L22.5 36.6 L17 24.5 L27 24.5 Z" fill="#000" stroke="#fff" stroke-width="2.2" stroke-linejoin="round"/></svg>
</body></html>
